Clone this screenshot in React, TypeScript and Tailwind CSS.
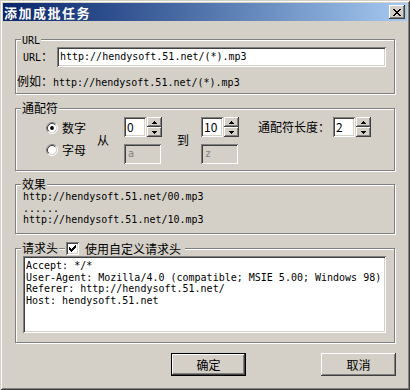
import React from "react";

const raised =
  "shadow-[inset_-1px_-1px_#404040,inset_1px_1px_#fff,inset_-2px_-2px_#808080,inset_2px_2px_#d4d0c8]";
const sunken =
  "shadow-[inset_1px_1px_#808080,inset_-1px_-1px_#fff,inset_2px_2px_#404040,inset_-2px_-2px_#d4d0c8]";
const mono = "font-['DejaVu_Sans_Mono',monospace] text-[10px]";

const Arrow = ({ up }: { up?: boolean }) => (
  <svg width="5" height="3" viewBox="0 0 5 3">
    <path d={up ? "M2 0h1v1h1v1h1v1H0V2h1V1h1z" : "M0 0h5v1H4v1H3v1H2V2H1V1H0z"} fill="#000" />
  </svg>
);

const Spinner = () => (
  <div className="flex flex-col w-[15px] h-[20px] ml-[1px]">
    <div className={`h-[10px] flex items-center justify-center bg-[#d4d0c8] ${raised}`}>
      <Arrow up />
    </div>
    <div className={`h-[10px] flex items-center justify-center bg-[#d4d0c8] ${raised}`}>
      <Arrow />
    </div>
  </div>
);

const SpinBox = ({ value }: { value: string }) => (
  <div className="flex">
    <div className={`w-[22px] h-[20px] bg-white flex items-center pl-[3px] text-[12px] ${sunken}`}>{value}</div>
    <Spinner />
  </div>
);

const Disabled = ({ value }: { value: string }) => (
  <div className={`w-[37px] h-[20px] bg-[#d4d0c8] flex items-center pl-[4px] text-[#808080] ${mono} ${sunken}`}>
    {value}
  </div>
);

const Radio = ({ checked }: { checked?: boolean }) => (
  <svg width="12" height="12" viewBox="0 0 12 12">
    <circle cx="6" cy="6" r="4.5" fill="#fff" />
    <path d="M2.11 9.89A5.5 5.5 0 0 1 9.89 2.11" stroke="#808080" fill="none" />
    <path d="M9.89 2.11A5.5 5.5 0 0 1 2.11 9.89" stroke="#fff" fill="none" />
    <path d="M2.82 9.18A4.5 4.5 0 0 1 9.18 2.82" stroke="#404040" fill="none" />
    <path d="M9.18 2.82A4.5 4.5 0 0 1 2.82 9.18" stroke="#d4d0c8" fill="none" />
    {checked && <circle cx="6" cy="6" r="1.9" fill="#000" />}
  </svg>
);

const Group = ({ h, className, children }: { h: string; className?: string; children: React.ReactNode }) => (
  <div
    className={`relative w-[380px] border border-[#808080] shadow-[1px_1px_0_#fff,inset_1px_1px_0_#fff] ${h} ${className ?? ""}`}
  >
    {children}
  </div>
);

const GroupLabel = ({ children }: { children: React.ReactNode }) => (
  <div className="absolute -top-[7px] left-[5px] px-[1px] bg-[#d4d0c8] leading-[12px]">{children}</div>
);

export default function App() {
  return (
    <div className="w-[410px] h-[390px] bg-[#d4d0c8] p-[3px] flex flex-col font-['Noto_Sans_CJK_SC',sans-serif] text-black shadow-[inset_1px_1px_#d4d0c8,inset_-1px_-1px_#404040,inset_2px_2px_#fff,inset_-2px_-2px_#808080]">
      <div className="h-[18px] flex items-center justify-between bg-linear-to-r from-[#0a246a] to-[#a6caf0] pl-[1px] pr-[2px]">
        <span className="text-white font-bold text-[13px] tracking-[1.5px] leading-[13px]">添加成批任务</span>
        <div className={`w-[16px] h-[14px] bg-[#d4d0c8] flex items-center justify-center ${raised}`}>
          <svg width="8" height="7" viewBox="0 0 8 7">
            <path d="M0 0h2v1h1v1h2V1h1V0h2v1H7v1H6v1H5v1h1v1h1v1h1v1H6V6H5V5H3v1H2v1H0V6h1V5h1V4h1V3H2V2H1V1H0z" fill="#000" />
          </svg>
        </div>
      </div>

      <div className="flex flex-col pl-[12px] text-[12px] leading-[12px]">
        <Group h="h-[55px]" className="mt-[18px]">
          <GroupLabel>
            <span className={mono}>URL</span>
          </GroupLabel>
          <div className="flex items-center pl-[7px] pt-[7px]">
            <span className="w-[34px]">
              <span className={mono}>URL</span>：
            </span>
            <div className={`w-[329px] h-[20px] bg-white flex items-center pl-[3px] ${mono} ${sunken}`}>
              http://hendysoft.51.net/(*).mp3
            </div>
          </div>
          <div className="mt-[8px] pl-[1px]">
            例如：<span className={mono}>http://hendysoft.51.net/(*).mp3</span>
          </div>
        </Group>

        <Group h="h-[63px]" className="mt-[14px]">
          <GroupLabel>通配符</GroupLabel>
          <div className="flex items-start pl-[30px] pt-[8px]">
            <div className="flex flex-col gap-[10px] mt-[5px]">
              <div className="flex items-center gap-[4px] h-[12px]">
                <Radio checked />
                <span>数字</span>
              </div>
              <div className="flex items-center gap-[4px] h-[12px]">
                <Radio />
                <span>字母</span>
              </div>
            </div>
            <span className="ml-[11px] mt-[17px]">从</span>
            <div className="ml-[15px] flex flex-col gap-[7px]">
              <SpinBox value="0" />
              <Disabled value="a" />
            </div>
            <span className="ml-[15px] mt-[17px]">到</span>
            <div className="ml-[12px] flex flex-col gap-[7px]">
              <SpinBox value="10" />
              <Disabled value="z" />
            </div>
            <span className="ml-[19px] mt-[4px]">通配符长度：</span>
            <div className="ml-[3px]">
              <SpinBox value="2" />
            </div>
          </div>
        </Group>

        <Group h="h-[50px]" className="mt-[13px]">
          <GroupLabel>效果</GroupLabel>
          <div className={`pl-[7px] pt-[6px] leading-[11.5px] ${mono}`}>
            <div>http://hendysoft.51.net/00.mp3</div>
            <div>......</div>
            <div>http://hendysoft.51.net/10.mp3</div>
          </div>
        </Group>

        <Group h="h-[95px]" className="mt-[14px]">
          <GroupLabel>请求头</GroupLabel>
          <div className="absolute -top-[7px] left-[49px] pl-[1px] pr-[4px] bg-[#d4d0c8] flex items-center gap-[6px] leading-[12px]">
            <div className={`w-[13px] h-[13px] bg-white flex items-center justify-center ${sunken}`}>
              <svg width="7" height="7" viewBox="0 0 7 7">
                <path d="M6 0h1v3H6v1H5v1H4v1H3v1H2V6H1V5H0V2h1v1h1v1h1V3h1V2h1V1h1z" fill="#000" />
              </svg>
            </div>
            <span>使用自定义请求头</span>
          </div>
          <div
            className={`ml-[7px] mt-[7px] w-[363px] h-[77px] bg-white pl-[3px] pt-[4px] leading-[11.7px] whitespace-pre ${mono} ${sunken}`}
          >
            <div>Accept: */*</div>
            <div>User-Agent: Mozilla/4.0 (compatible; MSIE 5.00; Windows 98)</div>
            <div>Referer: http://hendysoft.51.net/</div>
            <div>Host: hendysoft.51.net</div>
          </div>
        </Group>

        <div className="w-[381px] mt-[10px] flex justify-end gap-[75px]">
          <div className="w-[75px] h-[23px] border border-black">
            <div className={`w-full h-full bg-[#d4d0c8] flex items-center justify-center ${raised}`}>确定</div>
          </div>
          <div className={`w-[75px] h-[23px] bg-[#d4d0c8] flex items-center justify-center ${raised}`}>取消</div>
        </div>
      </div>
    </div>
  );
}
